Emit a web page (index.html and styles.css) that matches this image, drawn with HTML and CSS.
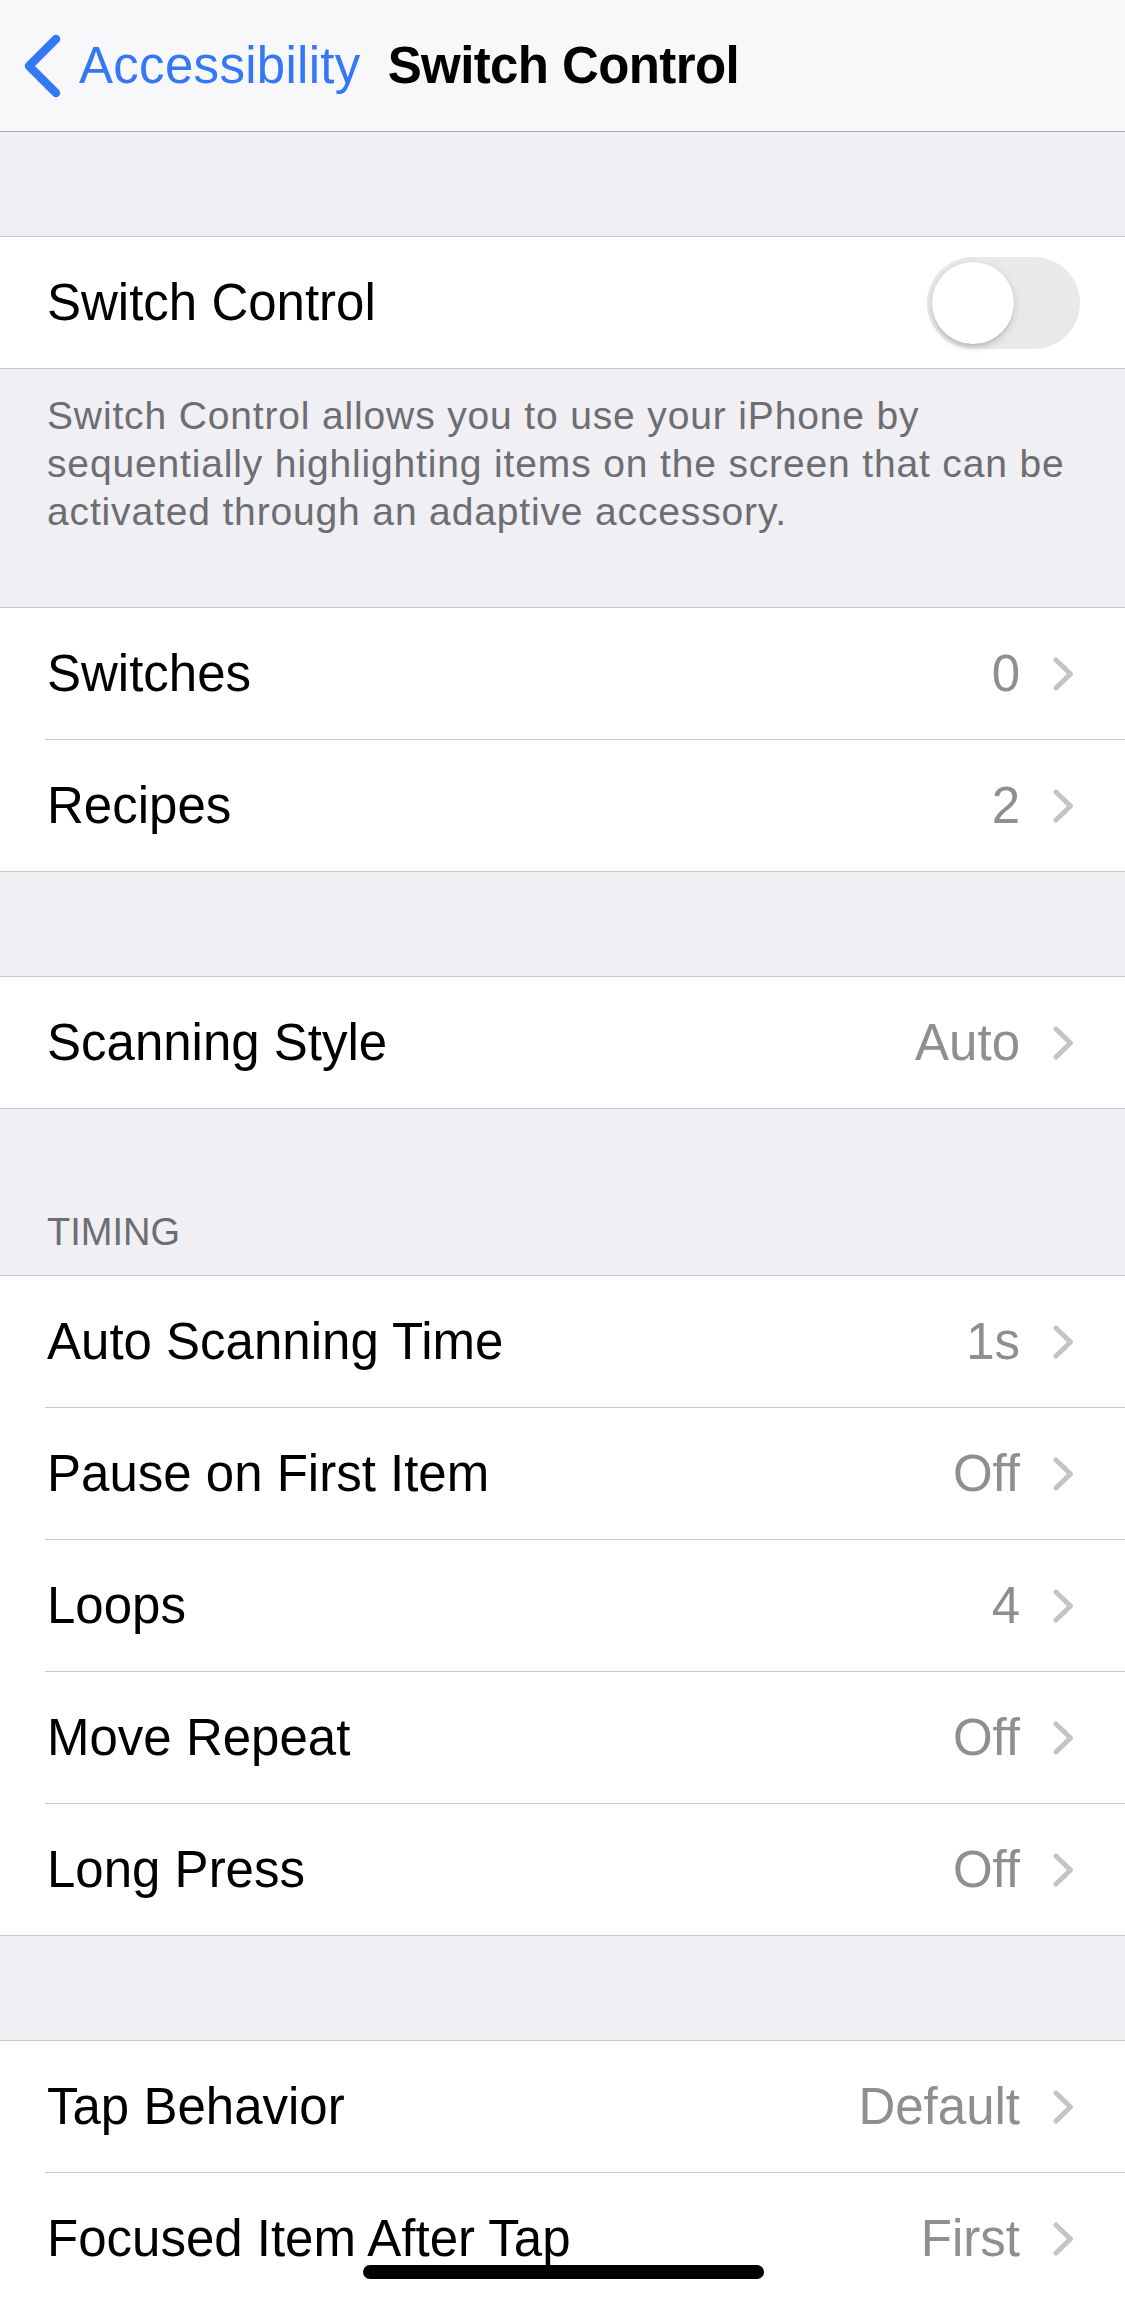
FILE: index.html
```html
<!DOCTYPE html>
<html lang="en">
<head>
<meta charset="utf-8">
<title>Switch Control</title>
<link rel="stylesheet" href="styles.css">
</head>
<body>
<div class="screen">
  <header class="nav">
    <svg class="back-chevron" width="40" height="66" viewBox="0 0 40 66" aria-hidden="true">
      <polyline points="33,6 6,33 33,60" fill="none" stroke="#3478f6" stroke-width="8.5" stroke-linecap="round" stroke-linejoin="round"/>
    </svg>
    <span class="back-label">Accessibility</span>
    <span class="nav-title">Switch Control</span>
  </header>

  <div class="gap"></div>

  <section class="group">
    <div class="cell">
      <div class="cell-content">
        <span class="label">Switch Control</span>
        <span class="toggle"><span class="knob"></span></span>
      </div>
    </div>
  </section>

  <p class="footer">Switch Control allows you to use your iPhone by sequentially highlighting items on the screen that can be activated through an adaptive accessory.</p>

  <section class="group">
    <div class="cell">
      <div class="cell-content">
        <span class="label">Switches</span>
        <span class="value">0</span>
        <svg class="chev" width="21" height="34" viewBox="0 0 21 34"><polyline points="3,3 17.5,17 3,31" fill="none" stroke="#c4c4c7" stroke-width="5" stroke-linecap="round" stroke-linejoin="round"/></svg>
      </div>
    </div>
    <div class="cell">
      <div class="cell-content">
        <span class="label">Recipes</span>
        <span class="value">2</span>
        <svg class="chev" width="21" height="34" viewBox="0 0 21 34"><polyline points="3,3 17.5,17 3,31" fill="none" stroke="#c4c4c7" stroke-width="5" stroke-linecap="round" stroke-linejoin="round"/></svg>
      </div>
    </div>
  </section>

  <div class="gap"></div>

  <section class="group">
    <div class="cell">
      <div class="cell-content">
        <span class="label">Scanning Style</span>
        <span class="value">Auto</span>
        <svg class="chev" width="21" height="34" viewBox="0 0 21 34"><polyline points="3,3 17.5,17 3,31" fill="none" stroke="#c4c4c7" stroke-width="5" stroke-linecap="round" stroke-linejoin="round"/></svg>
      </div>
    </div>
  </section>

  <h2 class="header">TIMING</h2>

  <section class="group">
    <div class="cell">
      <div class="cell-content">
        <span class="label">Auto Scanning Time</span>
        <span class="value">1s</span>
        <svg class="chev" width="21" height="34" viewBox="0 0 21 34"><polyline points="3,3 17.5,17 3,31" fill="none" stroke="#c4c4c7" stroke-width="5" stroke-linecap="round" stroke-linejoin="round"/></svg>
      </div>
    </div>
    <div class="cell">
      <div class="cell-content">
        <span class="label">Pause on First Item</span>
        <span class="value">Off</span>
        <svg class="chev" width="21" height="34" viewBox="0 0 21 34"><polyline points="3,3 17.5,17 3,31" fill="none" stroke="#c4c4c7" stroke-width="5" stroke-linecap="round" stroke-linejoin="round"/></svg>
      </div>
    </div>
    <div class="cell">
      <div class="cell-content">
        <span class="label">Loops</span>
        <span class="value">4</span>
        <svg class="chev" width="21" height="34" viewBox="0 0 21 34"><polyline points="3,3 17.5,17 3,31" fill="none" stroke="#c4c4c7" stroke-width="5" stroke-linecap="round" stroke-linejoin="round"/></svg>
      </div>
    </div>
    <div class="cell">
      <div class="cell-content">
        <span class="label">Move Repeat</span>
        <span class="value">Off</span>
        <svg class="chev" width="21" height="34" viewBox="0 0 21 34"><polyline points="3,3 17.5,17 3,31" fill="none" stroke="#c4c4c7" stroke-width="5" stroke-linecap="round" stroke-linejoin="round"/></svg>
      </div>
    </div>
    <div class="cell">
      <div class="cell-content">
        <span class="label">Long Press</span>
        <span class="value">Off</span>
        <svg class="chev" width="21" height="34" viewBox="0 0 21 34"><polyline points="3,3 17.5,17 3,31" fill="none" stroke="#c4c4c7" stroke-width="5" stroke-linecap="round" stroke-linejoin="round"/></svg>
      </div>
    </div>
  </section>

  <div class="gap"></div>

  <section class="group">
    <div class="cell">
      <div class="cell-content">
        <span class="label">Tap Behavior</span>
        <span class="value">Default</span>
        <svg class="chev" width="21" height="34" viewBox="0 0 21 34"><polyline points="3,3 17.5,17 3,31" fill="none" stroke="#c4c4c7" stroke-width="5" stroke-linecap="round" stroke-linejoin="round"/></svg>
      </div>
    </div>
    <div class="cell">
      <div class="cell-content">
        <span class="label">Focused Item After Tap</span>
        <span class="value">First</span>
        <svg class="chev" width="21" height="34" viewBox="0 0 21 34"><polyline points="3,3 17.5,17 3,31" fill="none" stroke="#c4c4c7" stroke-width="5" stroke-linecap="round" stroke-linejoin="round"/></svg>
      </div>
    </div>
  </section>

  <div class="home-indicator"></div>
</div>
</body>
</html>
```

FILE: styles.css
```css
html, body {
  margin: 0;
  padding: 0;
}

body {
  background: #efeff4;
  font-family: "Liberation Sans", Arial, sans-serif;
  color: #000;
}

.screen {
  position: relative;
  width: 1125px;
  height: 2304px;
  overflow: hidden;
  background: #efeff4;
}

.nav {
  height: 131px;
  display: flex;
  align-items: center;
  padding-left: 23px;
  background: #f8f8fa;
  border-bottom: 1px solid #a9a9ad;
  box-sizing: content-box;
}

.back-chevron {
  flex: none;
  margin-top: 1px;
}

.back-label {
  font-size: 51px;
  color: #3478f6;
  margin-left: 16px;
  letter-spacing: 0.3px;
}

.nav-title {
  font-size: 51px;
  font-weight: 700;
  margin-left: 27px;
  letter-spacing: -0.6px;
}

.gap {
  height: 104px;
}

.group {
  background: #fff;
  border-top: 1px solid #c8c7cc;
  border-bottom: 1px solid #c8c7cc;
}

.cell {
  padding-left: 45px;
}

.cell-content {
  height: 131px;
  display: flex;
  align-items: center;
  padding-right: 51px;
  border-bottom: 1px solid #c8c7cc;
}

.cell:last-child .cell-content {
  border-bottom: none;
}

.label {
  font-size: 51px;
  padding-left: 2px;
  flex: 1;
  white-space: nowrap;
}

.value {
  font-size: 51px;
  color: #8e8e93;
  margin-right: 33px;
}

.chev {
  flex: none;
}

.toggle {
  position: relative;
  width: 153px;
  height: 92px;
  border-radius: 46px;
  background: #e9e9eb;
  margin-right: -6px;
  flex: none;
}

.knob {
  position: absolute;
  left: 5px;
  top: 5px;
  width: 82px;
  height: 82px;
  border-radius: 50%;
  background: #fff;
  box-shadow: 0 3px 8px rgba(0, 0, 0, 0.15), 0 3px 1px rgba(0, 0, 0, 0.06), 0 0 0 0.5px rgba(0, 0, 0, 0.04);
}

.footer {
  margin: 0;
  padding: 23px 40px 71px 47px;
  font-size: 39px;
  line-height: 48px;
  letter-spacing: 0.85px;
  color: #6d6d72;
}

.header {
  margin: 0;
  padding: 99px 47px 19px;
  font-size: 38px;
  line-height: 48px;
  font-weight: 400;
  color: #6d6d72;
}

.home-indicator {
  position: absolute;
  left: 50%;
  bottom: 25px;
  width: 401px;
  height: 14px;
  margin-left: -200px;
  border-radius: 7px;
  background: #000;
}
```
